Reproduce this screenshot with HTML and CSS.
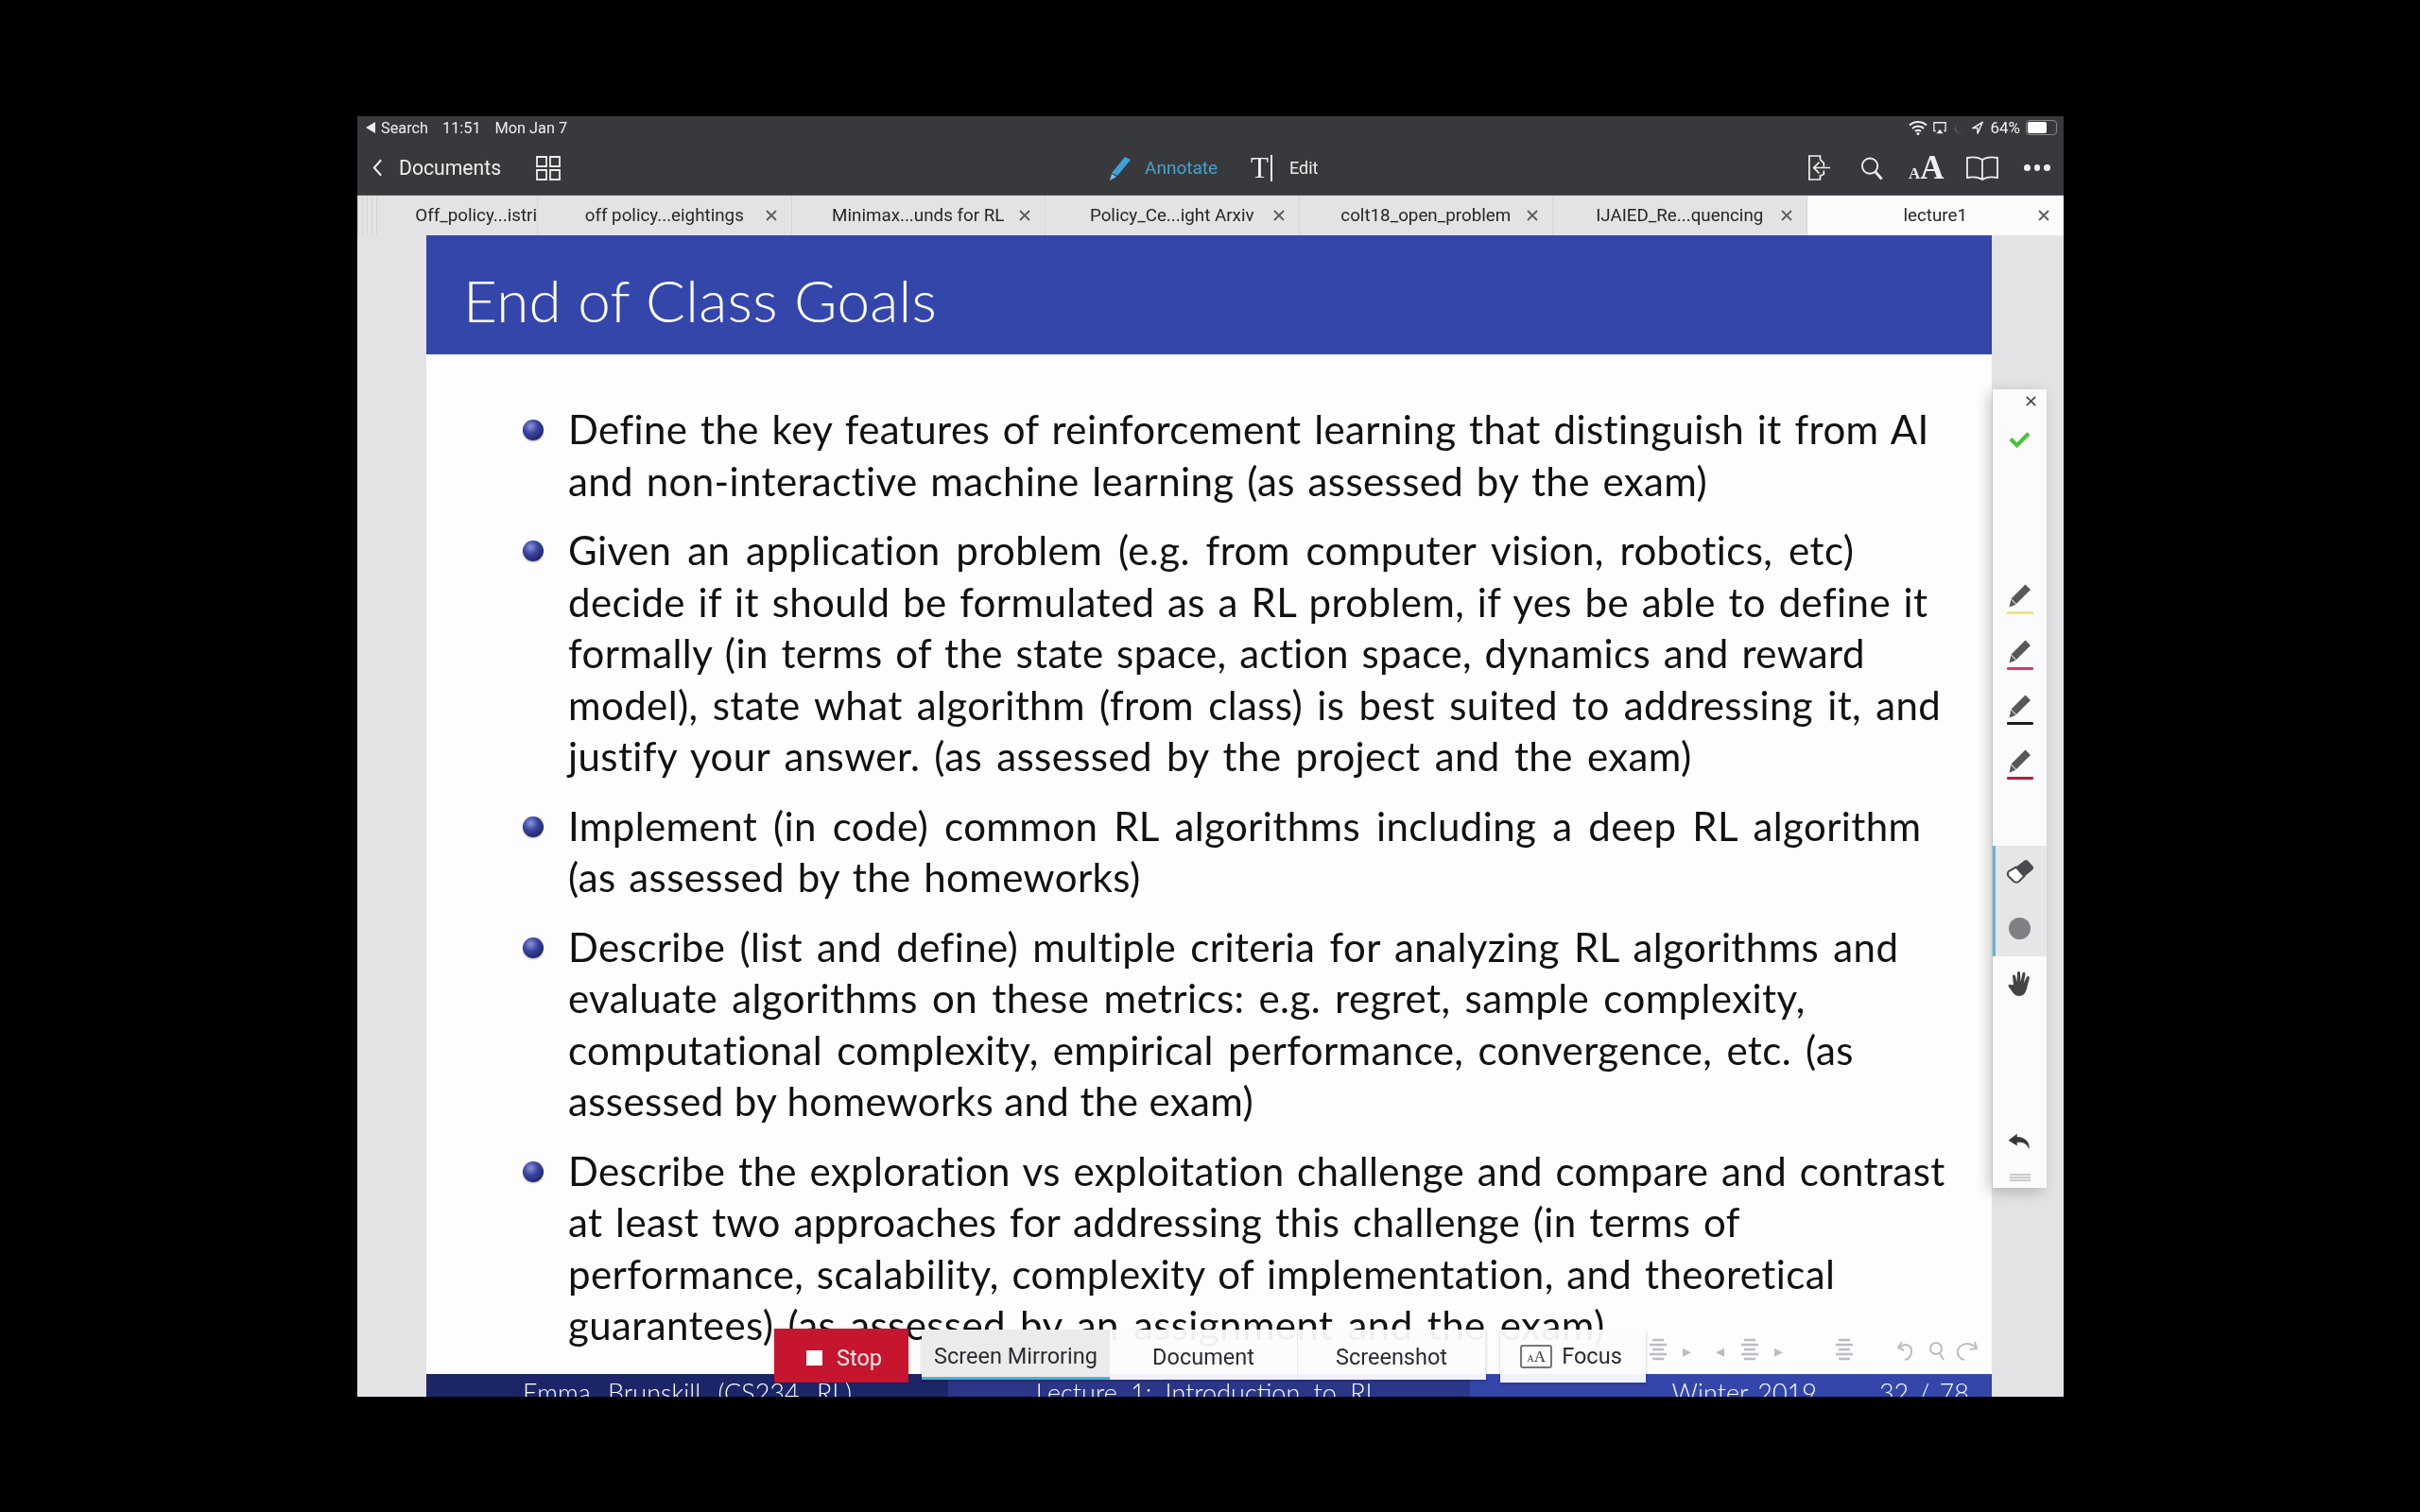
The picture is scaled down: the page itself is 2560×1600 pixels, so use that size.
FILE: index.html
```html
<!DOCTYPE html>
<html lang="en">
<head>
<meta charset="utf-8">
<title>End of Class Goals</title>
<link rel="stylesheet" href="styles.css">
</head>
<body>
<svg class="defs" width="0" height="0">
  <defs>
    <symbol id="x" viewBox="0 0 14 14"><path d="M2 2l10 10M12 2L2 12" fill="none" stroke="currentColor" stroke-width="1.8"/></symbol>
    <symbol id="pen" viewBox="0 0 30 30"><path d="M20.5 2.5l5.5 5.5L11 23l-5.500-5.500z" fill="#58585a"/><path d="M5.300 18.500l5.200 5.200-7 2.800z" fill="#58585a"/></symbol>
    <symbol id="lines" viewBox="0 0 18 26"><path d="M3 2h12M0 7h18M3 12h12M0 17h18M3 22h12" stroke="#bcbcc6" stroke-width="2.500" fill="none"/></symbol>
  </defs>
</svg>
<main class="screen">
  <header class="status">
    <div class="status-left"><span class="tri"></span><span>Search</span><span class="time">11:51</span><span>Mon Jan 7</span></div>
    <div class="status-right">
      <svg class="st-wifi" viewBox="0 0 20 16"><path d="M1 5.500a13 13 0 0 1 18 0M4 9a8.500 8.500 0 0 1 12 0M7 12a4 4 0 0 1 6 0" fill="none" stroke="#f2f2f2" stroke-width="2"/><circle cx="10" cy="14.500" r="1.500" fill="#f2f2f2"/></svg>
      <svg class="st-air" viewBox="0 0 16 16"><path d="M3 12H1V2h14v10h-2" fill="none" stroke="#eee" stroke-width="1.500"/><path d="M4 15l4-5 4 5z" fill="#eee"/></svg>
      <svg class="st-moon" viewBox="0 0 12 16"><path d="M7 2a6 6 0 0 0 3 12A6.500 6.500 0 0 1 3 8a6 6 0 0 1 4-6z" fill="#77787a"/></svg>
      <svg class="st-loc" viewBox="0 0 14 16"><path d="M13 1L1 8h6v7z" fill="none" stroke="#eee" stroke-width="1.700"/></svg>
      <span class="pct">64%</span>
      <span class="battery"><span class="battery-fill"></span></span>
    </div>
  </header>
  <nav class="toolbar">
    <div class="tb-left">
      <svg class="chev" viewBox="0 0 12 22"><path d="M10 2L2 11l8 9" fill="none" stroke="#f0f0f0" stroke-width="2.200"/></svg>
      <span class="docs">Documents</span>
      <svg class="grid" viewBox="0 0 26 26"><path d="M1 1h10v10H1zM15 1h10v10H15zM1 15h10v10H1zM15 15h10v10H15z" fill="none" stroke="#eee" stroke-width="1.800"/></svg>
    </div>
    <div class="tb-mid">
      <svg class="annot-pen" viewBox="0 0 26 26"><path d="M19 1l6 3L11 21l-6-3z" fill="#3fa3d8"/><path d="M5 19l5 3-7 4z" fill="#7cc2e6"/></svg>
      <span class="annot">Annotate</span>
      <span class="t-ico"><span class="t-letter">T</span><span class="t-bar"></span></span>
      <span class="edit">Edit</span>
    </div>
    <div class="tb-right">
      <svg class="ic-share" viewBox="0 0 26 28"><path d="M14 5V1H2v26h12v-5M14 5l4 4v4M18 17v4l-4 2" fill="none" stroke="#eee" stroke-width="1.800"/><path d="M25 14H8M13 8l-6 6 6 6" fill="none" stroke="#eee" stroke-width="1.800"/></svg>
      <svg class="ic-search" viewBox="0 0 26 26"><circle cx="10.500" cy="10.500" r="8.500" fill="none" stroke="#eee" stroke-width="2"/><path d="M16.500 17l7 8" stroke="#eee" stroke-width="3"/></svg>
      <span class="ic-aa"><span class="aa-s">A</span><span class="aa-b">A</span></span>
      <svg class="ic-book" viewBox="0 0 34 26"><path d="M17 4C13 1 6 1 1 2v21c5-1 12-1 16 2 4-3 11-3 16-2V2c-5-1-12-1-16 2zm0 0v21" fill="none" stroke="#eee" stroke-width="1.800"/></svg>
      <span class="dots"><i></i><i></i><i></i></span>
    </div>
  </nav>
  <div class="tabs">
    <div class="tab tab-first"><span class="stack"></span><span class="tab-name">Off_policy...istri</span></div>
    <div class="tab"><span class="tab-name">off policy...eightings</span><svg class="tab-x"><use href="#x"/></svg></div>
    <div class="tab"><span class="tab-name">Minimax...unds for RL</span><svg class="tab-x"><use href="#x"/></svg></div>
    <div class="tab"><span class="tab-name">Policy_Ce...ight Arxiv</span><svg class="tab-x"><use href="#x"/></svg></div>
    <div class="tab"><span class="tab-name">colt18_open_problem</span><svg class="tab-x"><use href="#x"/></svg></div>
    <div class="tab"><span class="tab-name">IJAIED_Re...quencing</span><svg class="tab-x"><use href="#x"/></svg></div>
    <div class="tab tab-active"><span class="tab-name">lecture1</span><svg class="tab-x"><use href="#x"/></svg></div>
  </div>
  <section class="viewer">
    <article class="slide">
      <h1 class="slide-title">End of Class Goals</h1>
      <div class="slide-body">
        <ul class="goals">
          <li><span class="line tight">Define the key features of reinforcement learning that distinguish it from AI</span><span class="line tight">and non-interactive machine learning (as assessed by the exam)</span></li>
          <li><span class="line wide">Given an application problem (e.g. from computer vision, robotics, etc)</span><span class="line tight">decide if it should be formulated as a RL problem, if yes be able to define it</span><span class="line tight">formally (in terms of the state space, action space, dynamics and reward</span><span class="line">model), state what algorithm (from class) is best suited to addressing it, and</span><span class="line">justify your answer. (as assessed by the project and the exam)</span></li>
          <li><span class="line wide">Implement (in code) common RL algorithms including a deep RL algorithm</span><span class="line tight">(as assessed by the homeworks)</span></li>
          <li><span class="line">Describe (list and define) multiple criteria for analyzing RL algorithms and</span><span class="line">evaluate algorithms on these metrics: e.g. regret, sample complexity,</span><span class="line">computational complexity, empirical performance, convergence, etc. (as</span><span class="line tightest">assessed by homeworks and the exam)</span></li>
          <li><span class="line tight">Describe the exploration vs exploitation challenge and compare and contrast</span><span class="line tight">at least two approaches for addressing this challenge (in terms of</span><span class="line tight">performance, scalability, complexity of implementation, and theoretical</span><span class="line">guarantees) (as assessed by an assignment and the exam)</span></li>
        </ul>
        <div class="beamer-nav">
          <svg class="nv-list"><use href="#lines"/></svg><span class="nv-arrow">&#9656;</span>
          <span class="nv-arrow nv-a2">&#9666;</span><svg class="nv-list"><use href="#lines"/></svg><span class="nv-arrow">&#9656;</span>
          <svg class="nv-list nv-l3"><use href="#lines"/></svg>
          <svg class="nv-tools" viewBox="0 0 86 26"><path d="M6 4L2 10l6 3M3 10c7-6 14-2 13 5-.5 4-3 7-7 8" fill="none" stroke="#bcbcc6" stroke-width="2"/><circle cx="42" cy="11" r="6" fill="none" stroke="#bcbcc6" stroke-width="2"/><path d="M46 16l4 7" stroke="#bcbcc6" stroke-width="2"/><path d="M83 4l2 7-7 1M84 10c-7-7-18-4-19 4-.5 4 2 8 7 9" fill="none" stroke="#bcbcc6" stroke-width="2"/></svg>
        </div>
      </div>
      <footer class="slide-foot">
        <div class="foot-seg seg-dark">Emma Brunskill (CS234 RL)</div>
        <div class="foot-seg seg-mid">Lecture 1: Introduction to RL</div>
        <div class="foot-seg seg-light"><span>Winter 2019</span><span>32 / 78</span></div>
      </footer>
    </article>
  </section>

  <aside class="tool-panel">
    <div class="p-close"><svg class="p-x"><use href="#x"/></svg></div>
    <div class="p-check"><svg viewBox="0 0 24 20"><path d="M2 9l7 7L22 3" fill="none" stroke="#4ec23c" stroke-width="4.500"/></svg></div>
    <div class="p-pens">
      <div class="p-pen"><svg class="pen"><use href="#pen"/></svg><span class="ink ink-y"></span></div>
      <div class="p-pen"><svg class="pen"><use href="#pen"/></svg><span class="ink ink-r"></span></div>
      <div class="p-pen"><svg class="pen"><use href="#pen"/></svg><span class="ink ink-k"></span></div>
      <div class="p-pen"><svg class="pen"><use href="#pen"/></svg><span class="ink ink-c"></span></div>
    </div>
    <div class="p-selected">
      <div class="p-item"><svg class="eraser" viewBox="0 0 30 28"><path d="M11 8L19 1.500a3 3 0 0 1 4 .5l4.500 5a3 3 0 0 1-.5 4l-8 6.500z" fill="#4a4a4e"/><path d="M11 8l8 9-5 5a4 4 0 0 1-5.500 0L3.500 17a3.500 3.500 0 0 1 .5-5z" fill="#fff" stroke="#4a4a4e" stroke-width="2"/></svg></div>
      <div class="p-item"><span class="dot"></span></div>
    </div>
    <div class="p-item"><svg class="hand" viewBox="0 0 26 28"><path d="M6 15L5 6c0-2 2.500-2 3 0l1.500 6L10 2.500c0-2 3-2 3 0L13.500 12 15.500 3c.5-2 3-1.500 3 .5L17 13l3-6c1-1.800 3.300-.8 2.800 1.200L20 19c-1 5-4 8-8 8-3 0-5-1.500-7-4L.8 17c-1-1.500 1-3 2.500-1.700z" fill="#444446"/></svg></div>
    <div class="p-fill"></div>
    <div class="p-undo"><svg viewBox="0 0 28 24"><path d="M11 3L1 10.500 11 17v-4c6-.500 11 1 14 8 1-9-5-14-14-14.500z" fill="#38383c"/></svg></div>
    <div class="p-grip"><span></span></div>
  </aside>

  <div class="mirror-bar">
    <button class="btn-stop" type="button"><span class="stop-sq"></span>Stop</button>
    <div class="mirror-group">
      <button class="mbtn mbtn-on" type="button">Screen Mirroring</button>
      <button class="mbtn" type="button">Document</button>
      <button class="mbtn" type="button">Screenshot</button>
    </div>
    <button class="btn-focus" type="button"><span class="focus-ico"><span class="fs">A</span>A</span>Focus</button>
  </div>
</main>
</body>
</html>
```

FILE: styles.css
```css
* { box-sizing: border-box; }
html, body { margin: 0; height: 100%; background: #000; }
body { padding: 123px 0 0 378px; font-family: "Roboto", "Liberation Sans", sans-serif; overflow: hidden; }
.defs { position: absolute; }

.screen { position: relative; width: 1805px; height: 1355px; overflow: hidden; display: flex; flex-direction: column; background: #e3e2e5; filter: blur(0.6px); }

/* status */
.status { height: 24px; background: #38393c; color: #eee; display: flex; justify-content: space-between; align-items: center; padding: 0 7px 0 9px; font-size: 16.300px; flex: none; }
.status-left { display: flex; align-items: center; gap: 0; }
.tri { width: 0; height: 0; border: 6px solid transparent; border-right: 10px solid #eee; border-left: 0; margin-right: 6px; }
.time { margin: 0 15px; }
.status-right { display: flex; align-items: center; }
.st-wifi { width: 20px; height: 16px; margin-right: 6px; }
.st-air { width: 14px; height: 16px; margin-right: 7px; }
.st-moon { width: 11px; height: 15px; margin-right: 9px; }
.st-loc { width: 12px; height: 15px; margin-right: 7px; }
.pct { font-size: 17px; margin-right: 6px; }
.battery { width: 33px; height: 16px; border: 1px solid #888; border-radius: 4px; padding: 1px; display: block; }
.battery-fill { display: block; width: 20px; height: 100%; background: #fff; border-radius: 2px; }

/* toolbar */
.toolbar { height: 60px; background: #38393c; color: #eee; display: flex; align-items: center; position: relative; flex: none; padding: 2px 14px 0 16px; justify-content: space-between; border-bottom: 1px solid #55565a; }
.tb-left, .tb-mid, .tb-right { display: flex; align-items: center; }
.chev { width: 11px; height: 21px; margin-right: 17px; }
.docs { font-size: 21.200px; }
.grid { width: 26px; height: 26px; margin-left: 37px; }
.tb-mid { position: absolute; left: 793px; top: 2px; bottom: 0; }
.annot-pen { width: 26px; height: 26px; margin-right: 14px; }
.annot { color: #47a2cd; font-size: 19px; width: 112px; }
.t-ico { display: flex; align-items: center; width: 41px; }
.t-letter { font-family: "Liberation Serif", serif; font-size: 31px; color: #eee; line-height: 1; }
.t-bar { width: 2px; height: 28px; background: #eee; margin-left: 2px; }
.edit { font-size: 18px; }
.ic-share { width: 25px; height: 27px; margin-right: 31px; }
.ic-search { width: 25px; height: 26px; margin-right: 26px; }
.ic-aa { font-family: "Liberation Serif", serif; color: #eee; width: 38px; margin-right: 23px; display: flex; align-items: baseline; font-weight: 700; line-height: 1; }
.aa-s { font-size: 17px; }
.aa-b { font-size: 35px; }
.ic-book { width: 34px; height: 26px; margin-right: 27px; }
.dots { display: flex; gap: 4px; width: 28px; }
.dots i { width: 7px; height: 7px; background: #eee; border-radius: 50%; display: block; }

/* tabs */
.tabs { height: 42px; flex: none; display: flex; background: #e3e2e5; color: #262628; font-size: 18.800px; position: relative; z-index: 1; }
.tab { width: 268.500px; display: flex; align-items: center; justify-content: center; position: relative; border-right: 1px solid #d6d5d9; flex: none; white-space: nowrap; }
.tab-first { width: 191px; justify-content: flex-end; overflow: hidden; }
.stack { position: absolute; left: 0; top: 0; bottom: 0; width: 24px; background: repeating-linear-gradient(90deg, #d4d3d7 0 1px, transparent 1px 5px); }
.tab-active { background: #fcfcfd; border-right: 0; flex: 1; }
.tab-x { position: absolute; right: 14px; top: 14px; width: 14px; height: 14px; color: #5c5c60; }

/* slide */
.viewer { flex: 1; min-height: 0; padding: 0 76px 0 73px; display: flex; }
.slide { flex: 1; min-width: 0; display: flex; flex-direction: column; background: #fdfdfe; overflow: hidden; }
.slide-title { margin: 0; flex: none; height: 126px; background: #3546ab; color: #fff; font-family: "Lato", sans-serif; font-weight: 300; font-size: 62px; line-height: 136px; padding-left: 39px; letter-spacing: .3px; }
.slide-body { flex: 1; min-height: 0; padding: 52px 0 0 102px; position: relative; overflow: hidden; }
.goals { list-style: none; margin: 0; padding: 0; font-family: "Lato", sans-serif; font-size: 42px; line-height: 54.500px; color: #111; letter-spacing: .4px; word-spacing: 4px; }
.goals li { position: relative; padding-left: 48px; margin-bottom: 19px; }
.goals li::before { content: ""; position: absolute; left: 0; top: 17px; width: 22px; height: 22px; border-radius: 50%; background: radial-gradient(circle at 38% 32%, #8d94da 0, #3a44a0 38%, #1a2060 85%); box-shadow: 0 1px 2px rgba(0,0,0,.3); }
.line { display: block; white-space: nowrap; }
.line.tight { word-spacing: 2.500px; }
.line.tightest { word-spacing: 0; }
.line.wide { word-spacing: 5.700px; }

.beamer-nav { position: absolute; left: 1294px; top: 1041px; display: flex; align-items: center; height: 26px; color: #bcbcc6; font-size: 18px; }
.nv-list { width: 18px; height: 26px; }
.nv-arrow { margin: 0 12px 0 17px; }
.nv-a2 { margin: 0 18px 0 14px; }
.nv-l3 { margin-left: 44px; }
.nv-tools { width: 86px; height: 26px; margin-left: 46px; }

.slide-foot { flex: none; height: 24px; display: flex; overflow: hidden; color: #fff; font-family: "Lato", sans-serif; font-weight: 300; font-size: 27px; line-height: 40px; }
.foot-seg { width: 33.333%; white-space: nowrap; text-align: center; }
.seg-dark { background: #1b2568; word-spacing: 11px; }
.seg-mid { background: #2b3688; word-spacing: 7px; padding-right: 4px; }
.seg-light { background: #3546ab; display: flex; justify-content: flex-end; gap: 66px; padding-right: 24px; word-spacing: 3px; }

/* annotation panel */
.tool-panel { position: absolute; left: 1730px; top: 289px; width: 57px; height: 845px; background: #fbfafc; box-shadow: -4px 4px 14px rgba(0,0,0,.22); display: flex; flex-direction: column; align-items: stretch; }
.p-close { height: 24px; display: flex; justify-content: flex-end; align-items: center; padding-right: 10px; flex: none; }
.p-x { width: 13px; height: 13px; color: #48484c; }
.p-check { height: 58px; display: flex; justify-content: center; align-items: center; flex: none; margin-bottom: 109px; }
.p-check svg { width: 23px; height: 19px; }
.p-pens { flex: none; }
.p-pen { height: 58.300px; display: flex; flex-direction: column; align-items: center; justify-content: flex-end; padding-bottom: 11px; }
.pen { width: 30px; height: 30px; margin-bottom: 1px; }
.ink { width: 28px; height: 3px; display: block; border-radius: 1px; }
.ink-y { background: #f1e37c; }
.ink-r { background: #d83c5e; }
.ink-k { background: #1c1c1e; }
.ink-c { background: #b41c42; }
.p-selected { margin-top: 59px; background: #e6e5e8; border-left: 3px solid #62b7d3; flex: none; }
.p-item { height: 58.500px; display: flex; align-items: center; justify-content: center; flex: none; }
.p-selected .p-item { padding-right: 3px; }
.eraser { width: 32px; height: 30px; }
.dot { width: 23px; height: 23px; border-radius: 50%; background: #808084; display: block; }
.hand { width: 26px; height: 28px; }
.p-fill { flex: 1; }
.p-undo { height: 56px; display: flex; justify-content: center; align-items: center; flex: none; }
.p-undo svg { width: 27px; height: 22px; }
.p-grip { height: 21px; display: flex; justify-content: center; padding-top: 6px; flex: none; }
.p-grip span { width: 22px; height: 8px; display: block; background: repeating-linear-gradient(180deg, #c9c9cd 0 1.500px, transparent 1.500px 3px); }

/* mirroring bar */
.mirror-bar { position: absolute; left: 441px; top: 1283px; display: flex; align-items: flex-start; font-family: "Roboto", sans-serif; font-size: 23.500px; color: #2c2c30; }
button { font: inherit; color: inherit; border: 0; margin: 0; padding: 0; }
.btn-stop { width: 142px; height: 57px; background: #c6152e; color: #fbe9ec; display: flex; align-items: center; justify-content: center; gap: 15px; box-shadow: 0 0 3px rgba(0,0,0,.2); padding: 4px 0 0 6px; }
.stop-sq { width: 17px; height: 16px; background: #fff; display: block; }
.mirror-group { display: flex; margin-left: 14px; margin-top: 1px; background: rgba(252,252,253,.95); box-shadow: 0 2px 3px rgba(0,0,0,.18); }
.mbtn { width: 199px; height: 53px; background: transparent; border-right: 1px solid #ececee; padding-top: 5px; }
.mbtn-on { background: #ebebec; border-bottom: 3px solid #46b4da; border-right: 0; }
.btn-focus { margin-left: 15px; margin-top: 1px; width: 154px; height: 56px; background: rgba(252,252,253,.95); display: flex; align-items: center; justify-content: center; gap: 10px; box-shadow: 0 2px 3px rgba(0,0,0,.22); padding-right: 4px; }
.focus-ico { width: 34px; height: 25px; border: 2px solid #77777b; border-radius: 3px; font-family: "Liberation Serif", serif; font-size: 17px; line-height: 21px; text-align: center; color: #333; display: block; }
.fs { font-size: 10px; }
```
